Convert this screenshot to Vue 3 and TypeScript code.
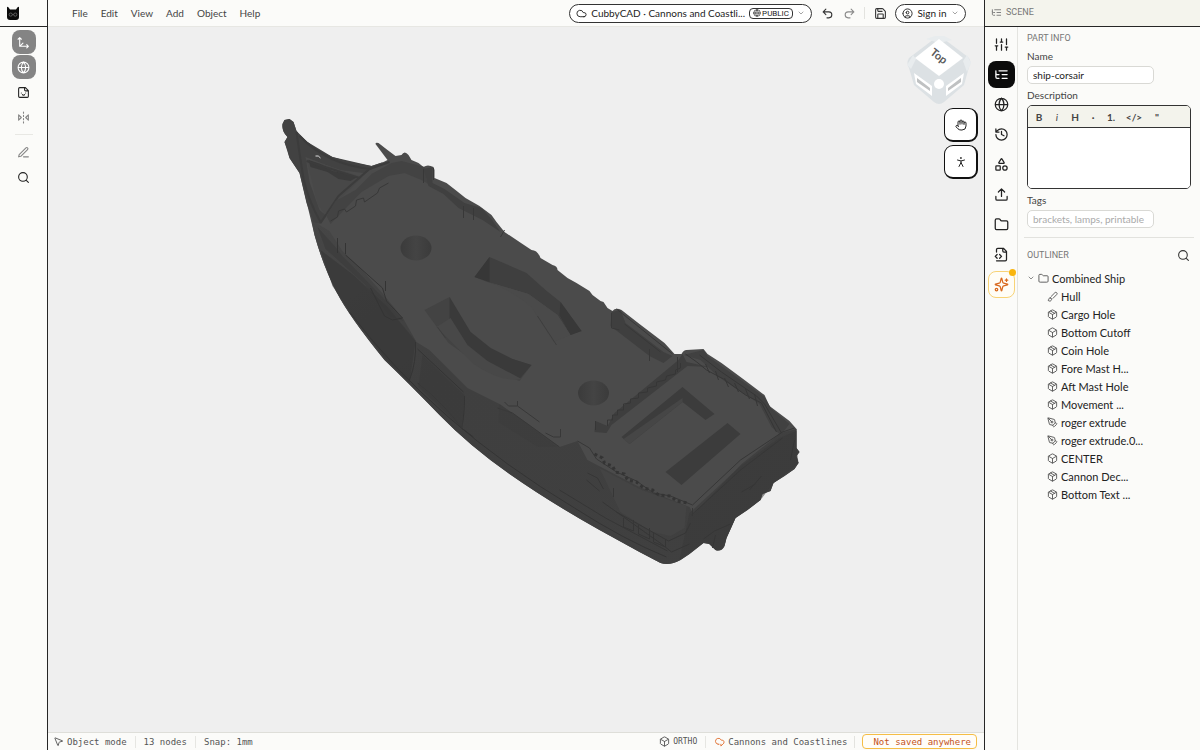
<script setup lang="ts">
import { ref } from 'vue'

type IconName = keyof typeof icons

const icons = {
  axes: 'M5 3v16h16 M5 19l6-6 M2 6l3-3 3 3 M18 16l3 3-3 3',
  globe: 'M2 12a10 10 0 1 0 20 0a10 10 0 1 0-20 0 M12 2a14.5 14.5 0 0 0 0 20 14.5 14.5 0 0 0 0-20 M2 12h20',
  sticker: 'M15.5 3H5a2 2 0 0 0-2 2v14c0 1.1.9 2 2 2h14a2 2 0 0 0 2-2V8.500L15.500 3Z M14 3v4a2 2 0 0 0 2 2h4 M8 13h.01 M16 13h.01 M10 16s.8 1 2 1c1.300 0 2-1 2-1',
  mirror: 'M3 7l5 5-5 5V7 M21 7l-5 5 5 5V7 M12 20v2 M12 14v2 M12 8v2 M12 2v2',
  pen: 'M12 20h9 M16.500 3.500a2.120 2.120 0 0 1 3 3L7 19l-4 1 1-4Z',
  search: 'M3 11a8 8 0 1 0 16 0a8 8 0 1 0-16 0 M21 21l-4.300-4.300',
  cloud: 'M17.500 19H9a7 7 0 1 1 6.710-9h1.790a4.500 4.500 0 1 1 0 9Z',
  cloudWarn: 'M9 18a6.500 6.500 0 1 1 6.700-9h2a4.500 4.500 0 0 1 1.800 8.500L15 22v-4 M9 18l2 0',
  undo: 'M9 14L4 9l5-5 M4 9h10.500a5.500 5.500 0 0 1 0 11H11',
  redo: 'M15 14l5-5-5-5 M20 9H9.500a5.500 5.500 0 0 0 0 11H13',
  save: 'M15.200 3a2 2 0 0 1 1.400.6l3.800 3.800a2 2 0 0 1 .6 1.400V19a2 2 0 0 1-2 2H5a2 2 0 0 1-2-2V5a2 2 0 0 1 2-2z M17 21v-7a1 1 0 0 0-1-1H8a1 1 0 0 0-1 1v7 M7 3v4a1 1 0 0 0 1 1h7',
  user: 'M2 12a10 10 0 1 0 20 0a10 10 0 1 0-20 0 M9 10a3 3 0 1 0 6 0a3 3 0 1 0-6 0 M7 20.662V19a2 2 0 0 1 2-2h6a2 2 0 0 1 2 2v1.662',
  chevron: 'M6 9l6 6 6-6',
  sliders: 'M4 21v-7 M4 10V3 M12 21v-9 M12 8V3 M20 21v-5 M20 12V3 M2 14h4 M10 8h4 M18 16h4',
  tree: 'M21 12h-8 M21 6H8 M21 18h-8 M3 6v4c0 1.100.9 2 2 2h3 M3 10v6c0 1.100.9 2 2 2h3',
  history: 'M3 12a9 9 0 1 0 9-9 9.750 9.750 0 0 0-6.740 2.740L3 8 M3 3v5h5 M12 7v5l4 2',
  shapes: 'M8.300 10a.7.7 0 0 1-.626-1.079L11.400 3a.7.7 0 0 1 1.198-.043L16.300 8.900a.7.7 0 0 1-.572 1.100Z M4 14h5a1 1 0 0 1 1 1v5a1 1 0 0 1-1 1H4a1 1 0 0 1-1-1v-5a1 1 0 0 1 1-1Z M14 17.500a3.500 3.500 0 1 0 7 0a3.500 3.500 0 1 0-7 0',
  upload: 'M12 3v12 M17 8l-5-5-5 5 M21 15v4a2 2 0 0 1-2 2H5a2 2 0 0 1-2-2v-4',
  folder: 'M20 20a2 2 0 0 0 2-2V8a2 2 0 0 0-2-2h-7.900a2 2 0 0 1-1.690-.9L9.600 3.900A2 2 0 0 0 7.930 3H4a2 2 0 0 0-2 2v13a2 2 0 0 0 2 2Z',
  code: 'M4 22h14a2 2 0 0 0 2-2V7l-5-5H6a2 2 0 0 0-2 2v4 M14 2v4a2 2 0 0 0 2 2h4 M5 12l-3 3 3 3 M9 18l3-3-3-3',
  sparkles: 'M9.937 15.500A2 2 0 0 0 8.500 14.063l-6.135-1.582a.5.5 0 0 1 0-.962L8.500 9.936A2 2 0 0 0 9.937 8.500l1.582-6.135a.5.5 0 0 1 .963 0L14.063 8.500A2 2 0 0 0 15.500 9.937l6.135 1.581a.5.5 0 0 1 0 .964L15.500 14.063a2 2 0 0 0-1.437 1.437l-1.582 6.135a.5.5 0 0 1-.963 0z M20 3v4 M22 5h-4 M2 20a2 2 0 1 0 4 0a2 2 0 1 0-4 0',
  hand: 'M18 11V6a2 2 0 0 0-4 0 M14 10V4a2 2 0 0 0-4 0v2 M10 10.500V6a2 2 0 0 0-4 0v8 M18 8a2 2 0 1 1 4 0v6a8 8 0 0 1-8 8h-2c-2.800 0-4.500-.86-5.990-2.340l-3.600-3.600a2 2 0 0 1 2.830-2.820L7 15',
  person: 'M11 4a1 1 0 1 0 2 0a1 1 0 1 0-2 0 M8 21l4-8 4 8 M5 8l7 2 7-2 M12 10v4',
  box: 'M21 8a2 2 0 0 0-1-1.730l-7-4a2 2 0 0 0-2 0l-7 4A2 2 0 0 0 3 8v8a2 2 0 0 0 1 1.730l7 4a2 2 0 0 0 2 0l7-4A2 2 0 0 0 21 16Z M3.300 7l8.700 5 8.700-5 M12 22V12',
  package: 'M21 8a2 2 0 0 0-1-1.730l-7-4a2 2 0 0 0-2 0l-7 4A2 2 0 0 0 3 8v8a2 2 0 0 0 1 1.730l7 4a2 2 0 0 0 2 0l7-4A2 2 0 0 0 21 16Z M3.300 7l8.700 5 8.700-5 M12 22V12 M7.500 4.270l9 5.150',
  nib: 'M15.707 21.293a1 1 0 0 1-1.414 0l-1.586-1.586a1 1 0 0 1 0-1.414l5.586-5.586a1 1 0 0 1 1.414 0l1.586 1.586a1 1 0 0 1 0 1.414z M18 13l-1.375-6.874a1 1 0 0 0-.746-.776L3.235 2.028a1 1 0 0 0-1.207 1.207L5.350 15.879a1 1 0 0 0 .776.746L13 18 M2.300 2.300l7.286 7.286 M9 11a2 2 0 1 0 4 0a2 2 0 1 0-4 0',
  brush: 'M9.060 11.900l8.070-8.060a2.850 2.850 0 1 1 4.030 4.030l-8.060 8.080 M7.070 14.940c-1.660 0-3 1.350-3 3.020 0 1.330-2.500 1.520-2 2.020 1.080 1.100 2.490 2.020 4 2.020 2.200 0 4-1.800 4-4.040a3.010 3.010 0 0 0-3-3.020z',
  pointer: 'M4.037 4.688a.495.495 0 0 1 .651-.651l16 6.500a.5.5 0 0 1-.063.947l-6.124 1.580a2 2 0 0 0-1.438 1.435l-1.579 6.126a.5.5 0 0 1-.947.063z',
}

const menus = ['File', 'Edit', 'View', 'Add', 'Object', 'Help']

const tabs: { icon: IconName; label: string }[] = [
  { icon: 'sliders', label: 'Properties' },
  { icon: 'tree', label: 'Scene' },
  { icon: 'globe', label: 'World' },
  { icon: 'history', label: 'History' },
  { icon: 'shapes', label: 'Shapes' },
  { icon: 'upload', label: 'Export' },
  { icon: 'folder', label: 'Files' },
  { icon: 'code', label: 'Code' },
  { icon: 'sparkles', label: 'Assistant' },
]
const activeTab = ref<IconName>('tree')

const nodes: { icon: IconName; name: string }[] = [
  { icon: 'brush', name: 'Hull' },
  { icon: 'package', name: 'Cargo Hole' },
  { icon: 'box', name: 'Bottom Cutoff' },
  { icon: 'package', name: 'Coin Hole' },
  { icon: 'package', name: 'Fore Mast H...' },
  { icon: 'package', name: 'Aft Mast Hole' },
  { icon: 'package', name: 'Movement ...' },
  { icon: 'nib', name: 'roger extrude' },
  { icon: 'nib', name: 'roger extrude.0...' },
  { icon: 'box', name: 'CENTER' },
  { icon: 'package', name: 'Cannon Dec...' },
  { icon: 'package', name: 'Bottom Text ...' },
]

const partName = ref('ship-corsair')
const description = ref('')
const tags = ref('')
</script>

<template>
  <div class="app">
    <aside class="tools">
      <a class="logo" href="#" aria-label="CubbyCAD">
        <svg viewBox="0 0 14 15" width="14" height="15">
          <path d="M1 1.200Q1.600 0 2.600 1.600L4 3.600h6l1.400-2Q12.400 0 13 1.200V11q0 3-3 3H4q-3 0-3-3Z" fill="#0b0b0b" />
          <circle cx="4.700" cy="8.600" r="1.600" fill="none" stroke="#777" stroke-width=".7" />
          <circle cx="9.300" cy="8.600" r="1.600" fill="none" stroke="#777" stroke-width=".7" />
          <path d="M6.300 8.600h1.400" stroke="#777" stroke-width=".7" />
        </svg>
      </a>
      <div class="tool-list">
        <button class="tool on" aria-label="Axes"><svg viewBox="0 0 24 24" class="icon i13"><path :d="icons.axes" /></svg></button>
        <button class="tool on" aria-label="Grid"><svg viewBox="0 0 24 24" class="icon i13"><path :d="icons.globe" /></svg></button>
        <button class="tool" aria-label="Sticker"><svg viewBox="0 0 24 24" class="icon i13"><path :d="icons.sticker" /></svg></button>
        <button class="tool dim" aria-label="Mirror"><svg viewBox="0 0 24 24" class="icon i13"><path :d="icons.mirror" /></svg></button>
        <hr />
        <button class="tool dim" aria-label="Sketch"><svg viewBox="0 0 24 24" class="icon i13"><path :d="icons.pen" /></svg></button>
        <button class="tool" aria-label="Search"><svg viewBox="0 0 24 24" class="icon i13"><path :d="icons.search" /></svg></button>
      </div>
    </aside>

    <main class="center">
      <header class="topbar">
        <nav class="menus">
          <button v-for="m in menus" :key="m">{{ m }}</button>
        </nav>
        <div class="top-actions">
          <button class="pill project">
            <svg viewBox="0 0 24 24" class="icon i11"><path :d="icons.cloud" /></svg>
            <span class="project-name">CubbyCAD · Cannons and Coastli...</span>
            <span class="public"><svg viewBox="0 0 24 24" class="icon i8"><path :d="icons.globe" /></svg>PUBLIC</span>
            <svg viewBox="0 0 24 24" class="icon i8 faint"><path :d="icons.chevron" /></svg>
          </button>
          <button class="flat undo" aria-label="Undo"><svg viewBox="0 0 24 24" class="icon i13"><path :d="icons.undo" /></svg></button>
          <button class="flat redo" aria-label="Redo"><svg viewBox="0 0 24 24" class="icon i13"><path :d="icons.redo" /></svg></button>
          <span class="sep"></span>
          <button class="flat save" aria-label="Save"><svg viewBox="0 0 24 24" class="icon i13"><path :d="icons.save" /></svg></button>
          <button class="pill sign">
            <svg viewBox="0 0 24 24" class="icon i11"><path :d="icons.user" /></svg>
            <span>Sign in</span>
            <svg viewBox="0 0 24 24" class="icon i8 faint"><path :d="icons.chevron" /></svg>
          </button>
        </div>
      </header>

      <section class="viewport" aria-label="Viewport">
        <svg class="ship" viewBox="49 27 935 705" preserveAspectRatio="xMidYMid meet">
          <defs>
            <linearGradient id="side" x1="0" y1="0" x2="1" y2="1">
              <stop offset="0" stop-color="#464646" />
              <stop offset=".35" stop-color="#3f3f3f" />
              <stop offset="1" stop-color="#404040" />
            </linearGradient>
            <linearGradient id="mast" x1="0" x2="1">
              <stop offset="0" stop-color="#3b3b3b" />
              <stop offset=".5" stop-color="#444" />
              <stop offset="1" stop-color="#3b3b3b" />
            </linearGradient>
          </defs>
          <path fill="#4b4b4b" d="M283 124L285 120 290 119 294 122 297 131 300 135 308 142 318 150 333 157 350 162 372 166 384 162 388 160 376 144Q376 142 379 143L388 150 396 156 402 155Q405 150 409 155L412 160 419 163 424 167Q428 164 434 167L435 170V178L447 183 456 190 466 198 480 206 492 215 497 222 505 232 520 242 532 250Q538 250 541 258L553 265Q558 266 558 270L568 278 577 283 590 291 593 295 601 301 604 302 608 308 613 311Q616 307 622 310L640 324 665 343 675 354 682 354Q684 350 687 350L704 349 708 354 722 363 745 380 765 395 770 406 790 421 797 429V448L800 452 797 456 799 463 795 469 785 476 774 483 771 491 763 494 761 500 752 507 748 510 736 518 732 527 727 538 725 546Q722 552 716 550L710 544 704 543 690 554 681 560Q670 566 661 563L640 552 600 530Q550 502 510 474T440 415T385 360Q350 317 337 292T315 235L303 185 300 173 290 158 288 150 285 142 288 137Q282 131 283 124Z" />
          <path fill="url(#side)" d="M312 220L330 231 343 251 360 267 382 292 404 319 417 342 430 350 468 388 500 404 530 425 560 447 578 441 588 460 640 487 690 507 694 514 742 464 781 433 797 429V448L800 452 797 456 799 463 795 469 785 476 774 483 771 491 763 494 761 500 748 510 736 518 732 527 727 538 725 546Q722 552 716 550L710 544 704 543 690 554 681 560Q670 566 661 563L640 552 600 530Q550 502 510 474T440 415T385 360Q350 317 337 292T315 235Z" />
          <path fill="#383838" d="M690 513L740 467 780 438 797 431V448L799 463 774 483 761 500 736 518 727 538Q724 552 716 550L706 541 680 560Z" opacity=".55" />
          <!-- bow -->
          <path fill="#424242" d="M283 124L285 120 290 119 294 122 297 131 308 142 333 157 372 166 384 162 364 173 340 170 306 157 310 182 320 210 327 216 321 224 314 222 307 203 300 173 290 158 285 142 288 137Q282 131 283 124Z" />
          <path fill="#484848" d="M307 159L351 173 363 177 325 214 318 204Z" />
          <path d="M309 160l12 4 12 7 10 2 15 4-7 4-12-2-11-7-17-5z" fill="#3b3b3b" />
          <path d="M297 132q3 22 7 47 5 22 17 43 M300 136q28 29 72 33 M307 161l53 17 M321 223l18-27 31-27 20-7" fill="none" stroke="#3c3c3c" stroke-width="2" />
          <path d="M316 156q3-1 5 2" stroke="#ddd" fill="none" />
          <!-- forward rail -->
          <path fill="#434343" d="M327 216L336 201 356 190 372 174 392 163 402 161 425 167 427 180 434 187 422 180 405 173 389 176 362 192 331 224Z" />
          <path d="M331 221l7-4 1-6 6-2 2 3 9-6 1-6 7-2 1 4 13-9 2-5 9-5" fill="none" stroke="#383838" />
          <path fill="#404040" d="M424 169l9-2v16l12 6 20 14 17 5 10 11 9 13-18-12-24-12-15-14-15-8z" />
          <path d="M424 169v14M434 168v12M464 206v12M474 208v12M501 237l4-7" stroke="#383838" fill="none" />
          <!-- port rail -->
          <path fill="#3c3c3c" d="M318 227l18 20 7 9 39 40 22 25-14-5-25-32-39-35z" opacity=".75" />
          <path fill="#383838" d="M321 250l33 25 34 32 28 34-6 42-24-24-31-40-22-33z" opacity=".7" />
          <path d="M338 238v15M346 243v11M346 255l37 33 4 13 16 17-10 2-8-4-14-28 M386 281v10 M416 342q1 20-6 38M465 396q0 20-3 32l12 9 M350 312q85 112 225 196 M418 383q24 18 46 47 M418 349l46 43 M575 508q50 32 92 49" stroke="#343434" fill="none" />
          <path fill="#3b3b3b" d="M423 355l42 40-2 34-44-42z" opacity=".7" />
          <!-- mast holes -->
          <ellipse cx="416.500" cy="248" rx="15.500" ry="12.500" fill="url(#mast)" />
          <ellipse cx="594" cy="393" rx="15.500" ry="12.500" fill="url(#mast)" />
          <!-- curved holds -->
          <path fill="#3f3f3f" d="M490 257L527 273 546 290 561 302 582 331 571 335 558 315 529 294 488 282 475 277Z" />
          <path fill="#373737" d="M490 257v25l-15-5z" />
          <path fill="#383838" d="M561 302l21 29-11 4-11-20z" />
          <path fill="#4a4a4a" d="M489 282l40 12 29 21 13 20-17 7-22-35q-20-17-43-25z" />
          <path fill="#434343" d="M425 310l25-13 15 25 6 10 20 16 22 11 19 6-12 16-40-16-31-22z" />
          <path fill="#3a3a3a" d="M450 297l15 25 6 10 20 16 22 11 19 6-12 14-38-14-20-22-12-18z" />
          <path fill="#484848" d="M437 327l14-9 17 27 20 16 34 18q-20 4-48-15z" />
          <path d="M538 316l19 29M438 327l8 11" stroke="#3e3e3e" />
          <!-- midship rails -->
          <path fill="#3f3f3f" d="M612 312l9-2 5 13 38 29 9 4-9 7-14-7-39-30z" />
          <path d="M612 313v15l8 2M650 349v12M625 324l36 28M617 309l56 45" stroke="#383838" fill="none" />
          <path d="M498 408l15 5 47 34M505 402l4 4h9v-5M518 406l22 16M546 433l8 4h7v-8" stroke="#383838" fill="none" />
          <path fill="#3b3b3b" d="M500 404l57 43-18 0-40-25z" opacity=".5" />
          <!-- quarterdeck -->
          <path fill="#3e3e3e" d="M596 421l12 5 7-13 64-53 4-6 4 8 23 5-22-1-76 59-5 8-12-1z" />
          <path d="M608 426v-6l5 0v-5l5 0v-5l6 0v-6l7-1v-4l8-1v-5l9-1v-4l9-2v-4l9-2 1-4 9-2v-4l5-2v-5M596 421v9M678 357v15" stroke="#363636" fill="none" />
          <path fill="#414141" d="M684 355l20-5 4 6 57 41 7 12 18 15-9 11-9-8-12-23-41-27-18-17z" />
          <path d="M686 354q12 8 21 16l17 9 22 16 16 8 15 29 M700 355l22 17 35 24 8 8 17 29 M706 364l4 9M716 371l3 9M725 378l4 9M735 383l4 9M746 389l4 10M755 394l3 12" stroke="#363636" fill="none" />
          <path fill="#3c3c3c" d="M622 437l61-50 32 27-9 6-23-18-53 42z" />
          <path fill="#464646" d="M683 398v4l-53 42-6-5z" />
          <path fill="#3c3c3c" d="M666 472l62-49 13 11-59 51z" />
          <!-- stern trim -->
          <path d="M578 441l12 7 7 11 20 13 20 9 17 12 17 3 22 9 48-45 42-28 12-4M693 508v8M692 515l49-45 42-32" fill="none" stroke="#373737" />
          <path d="M595 454l8 4 2 5 8 3 3 6 9 2 3 6 9 2 7 6 9 2 6 5 12 1 6 5 12 2" fill="none" stroke="#343434" stroke-dasharray="3 3" stroke-width="3" />
          <path fill="#474747" d="M600 468l42 22 45 16-2 22-14 8-18-4-32-20z" opacity=".65" />
          <path d="M588 473l10 5 6 11M587 480l13 11M614 488v9M617 512l52 29 17-8 5-10M624 518v9l10 4v-11M639 525v9l11 5v-11M654 532v10l12 5v-8M603 502l59 42 10 8 18-8M742 492l14-8M750 490l12-14M704 539l11-8 16-7M716 535l-3 13M795 440l-4 20M560 490l46 28 62 33" stroke="#363636" fill="none" />
        </svg>

        <svg class="cube" viewBox="0 0 66 70" width="66" height="70" role="img" aria-label="Top view cube">
          <path d="M3 22L28 3Q33 0 38 3L62 21Q66 25 63 31L58 49 38 66Q33 70 28 66L8 49 3 32Q0 27 3 22Z" fill="#dce1e4" />
          <path d="M1 29l6-10 3 4-5 10zM61 19l4 8-4 9-4-11zM20 3l9-3h9l8 4-13 3z" fill="#e8ecee" />
          <path d="M33 3L57 22 33 40 9 22Z" fill="#fff" />
          <path d="M8 37L26 50V60L10 48ZM58 37L40 50V60L56 48Z" fill="#fff" />
          <path d="M11 42l13 10v3l-13-9zM55 42L42 52v3l13-9z" fill="#bfc1c2" />
          <circle cx="33" cy="48" r="5" fill="#fff" />
          <text x="33" y="24" text-anchor="middle" transform="rotate(38 33 20)">Top</text>
        </svg>

        <div class="view-buttons">
          <button aria-label="Pan"><svg viewBox="0 0 24 24" class="icon i12"><path :d="icons.hand" /></svg></button>
          <button aria-label="Walk"><svg viewBox="0 0 24 24" class="icon i12"><path :d="icons.person" /></svg></button>
        </div>
      </section>

      <footer class="status">
        <span class="cell"><svg viewBox="0 0 24 24" class="icon i11"><path :d="icons.pointer" /></svg>Object mode</span>
        <span class="cell">13 nodes</span>
        <span class="cell">Snap: 1mm</span>
        <span class="grow"></span>
        <button class="ortho"><svg viewBox="0 0 24 24" class="icon i11"><path :d="icons.box" /></svg>ORTHO</button>
        <span class="cell"><svg viewBox="0 0 24 24" class="icon i11 orange"><path :d="icons.cloudWarn" /></svg>Cannons and Coastlines</span>
        <span class="sep"></span>
        <button class="unsaved">Not saved anywhere</button>
      </footer>
    </main>

    <aside class="panel">
      <header class="panel-head"><svg viewBox="0 0 24 24" class="icon i11"><path :d="icons.tree" /></svg>SCENE</header>
      <div class="panel-body">
        <nav class="tabs">
          <button
            v-for="t in tabs"
            :key="t.icon"
            :class="{ active: activeTab === t.icon, spark: t.icon === 'sparkles' }"
            :aria-label="t.label"
            @click="activeTab = t.icon"
          >
            <svg viewBox="0 0 24 24" class="icon i15"><path :d="icons[t.icon]" /></svg>
          </button>
        </nav>
        <div class="content">
          <section class="info">
            <h2>PART INFO</h2>
            <label for="name">Name</label>
            <input id="name" v-model="partName" type="text" />
            <label for="desc">Description</label>
            <div class="editor">
              <div class="format">
                <button><b>B</b></button>
                <button><i>i</i></button>
                <button><b>H</b></button>
                <button><b>·</b></button>
                <button><b>1.</b></button>
                <button class="wide"><b>&lt;/&gt;</b></button>
                <button><b>"</b></button>
              </div>
              <textarea id="desc" v-model="description"></textarea>
            </div>
            <label for="tags">Tags</label>
            <input id="tags" v-model="tags" type="text" placeholder="brackets, lamps, printable" />
          </section>
          <section class="outliner">
            <div class="outliner-head">
              <h2>OUTLINER</h2>
              <button class="flat" aria-label="Search outliner"><svg viewBox="0 0 24 24" class="icon i13"><path :d="icons.search" /></svg></button>
            </div>
            <ul>
              <li class="root">
                <svg viewBox="0 0 24 24" class="icon i8"><path :d="icons.chevron" /></svg>
                <svg viewBox="0 0 24 24" class="icon i11"><path :d="icons.folder" /></svg>
                <span>Combined Ship</span>
              </li>
              <li v-for="n in nodes" :key="n.name">
                <svg viewBox="0 0 24 24" class="icon i11"><path :d="icons[n.icon]" /></svg>
                <span>{{ n.name }}</span>
              </li>
            </ul>
          </section>
        </div>
      </div>
    </aside>
  </div>
</template>

<style>
body {
  margin: 0;
}
</style>

<style scoped>
* {
  box-sizing: border-box;
}
.app {
  display: grid;
  grid-template-columns: 48px minmax(0, 1fr) 216px;
  height: 100vh;
  background: #fbfbf9;
  color: #222;
  font-family: Lato, "Noto Sans", sans-serif;
  font-size: 10px;
}
button,
input,
textarea {
  font: inherit;
  color: inherit;
}
button {
  display: flex;
  align-items: center;
  justify-content: center;
  padding: 0;
  border: 0;
  background: none;
}
svg {
  flex: none;
}
.icon {
  fill: none;
  stroke: currentColor;
  stroke-width: 2;
  stroke-linecap: round;
  stroke-linejoin: round;
}
.i8 { width: 8px; height: 8px; }
.i11 { width: 11px; height: 11px; }
.i12 { width: 12px; height: 12px; }
.i13 { width: 13px; height: 13px; }
.i15 { width: 15px; height: 15px; }
.faint {
  color: #777;
}

.tools {
  border-right: 1px solid #262626;
}
.logo {
  display: flex;
  align-items: center;
  height: 27px;
  padding-left: 6px;
  border-bottom: 1px solid #262626;
}
.tool-list {
  display: flex;
  flex-direction: column;
  align-items: center;
  gap: 1px;
  padding-top: 3px;
}
.tool {
  width: 24px;
  height: 24px;
  border-radius: 8px;
}
.tool.on {
  background: #848484;
  color: #fff;
}
.tool.dim {
  color: #858585;
}
.tool-list hr {
  width: 18px;
  margin: 4px 0;
  border: 0;
  border-top: 1px solid #e8e8e4;
}

.center {
  display: flex;
  flex-direction: column;
  min-width: 0;
}
.topbar {
  display: flex;
  justify-content: space-between;
  align-items: center;
  height: 27px;
  padding: 0 18px 0 24px;
  border-bottom: 1px solid #e7e7e3;
}
.menus {
  display: flex;
  gap: 13px;
  color: #444;
}
.top-actions {
  display: flex;
  align-items: center;
}
.pill {
  height: 19px;
  border: 1px solid #333;
  border-radius: 10px;
  background: #fff;
  color: #222;
}
.project {
  min-width: 239px;
  padding: 0 6px;
  justify-content: flex-start;
  gap: 4px;
}
.project-name {
  flex: 1;
  text-align: left;
  white-space: nowrap;
}
.public {
  display: flex;
  align-items: center;
  gap: 1px;
  height: 11px;
  padding: 0 3px;
  border: 1px solid #333;
  border-radius: 4px;
  font: 8px Roboto, sans-serif;
}
.flat {
  width: 16px;
  height: 20px;
  color: #333;
}
.undo { margin-left: 7px; }
.redo { margin-left: 6px; color: #8a8a8a; }
.sep {
  width: 1px;
  height: 12px;
  margin: 0 7px;
  background: #e3e3df;
}
.sign {
  width: 71px;
  margin-left: 7px;
  gap: 4px;
}

.viewport {
  position: relative;
  flex: 1;
  min-height: 0;
  background: #efefef;
}
.ship {
  position: absolute;
  inset: 0;
  width: 100%;
  height: 100%;
}
.cube {
  position: absolute;
  top: 9px;
  right: 12px;
}
.cube text {
  font: bold 11px Lato, sans-serif;
  fill: #5b5b5b;
}
.view-buttons {
  position: absolute;
  top: 81px;
  right: 6px;
  display: grid;
  gap: 3px;
}
.view-buttons button {
  width: 34px;
  height: 34px;
  border: 1px solid #111;
  border-right-width: 2px;
  border-bottom-width: 2px;
  border-radius: 9px;
  background: #fff;
}

.status {
  display: flex;
  align-items: center;
  height: 18px;
  padding: 0 7px 0 5px;
  border-top: 1px solid #deded9;
  color: #555;
  font: 9px "DejaVu Sans Mono", monospace;
}
.cell,
.ortho {
  display: flex;
  align-items: center;
  gap: 3px;
  height: 12px;
  white-space: nowrap;
}
.status .cell + .cell,
.ortho + .cell {
  margin-left: 8px;
  padding-left: 8px;
  border-left: 1px solid #e6e6e2;
}
.grow {
  flex: 1;
}
.ortho {
  font-size: 8px;
}
.orange {
  color: #e07030;
}
.unsaved {
  height: 15px;
  padding: 0 5px 0 10px;
  border: 1px solid #f5bd45;
  border-radius: 4px;
  background: #fffdf8;
  color: #c4521b;
}

.panel {
  display: flex;
  flex-direction: column;
  min-width: 0;
  border-left: 1px solid #262626;
}
.panel-head {
  display: flex;
  align-items: center;
  gap: 4px;
  height: 27px;
  padding: 0 6px 2px;
  border-bottom: 1px solid #262626;
  background: #f4f4ed;
  color: #777;
  font: 9px Roboto, sans-serif;
}
.panel-body {
  display: flex;
  flex: 1;
  min-height: 0;
}
.tabs {
  display: flex;
  flex-direction: column;
  align-items: center;
  gap: 3px;
  width: 33px;
  padding-top: 4px;
  border-right: 1px solid #e4e4e0;
}
.tabs button {
  width: 27px;
  height: 27px;
  border-radius: 8px;
}
.tabs .active {
  background: #0b0b0b;
  color: #fff;
}
.tabs .spark {
  position: relative;
  border: 1px solid #f8d376;
  background: #fffdf6;
  color: #d9691e;
}
.spark::after {
  content: "";
  position: absolute;
  top: -3px;
  right: -2px;
  width: 7px;
  height: 7px;
  border-radius: 50%;
  background: #f9b50f;
}
.content {
  flex: 1;
  min-width: 0;
  padding: 0 6px;
}
.info {
  display: flex;
  flex-direction: column;
  padding: 4px 3px 9px;
  border-bottom: 1px solid #e2e2de;
}
h2 {
  margin: 0;
  color: #777;
  font: 9px/14px Roboto, sans-serif;
}
label {
  margin: 5px 0 4px;
  color: #444;
  line-height: 12px;
}
input {
  width: 127px;
  height: 18px;
  padding: 0 5px;
  border: 1px solid #d9d9d5;
  border-radius: 5px;
  outline: 0;
  background: #fff;
}
input::placeholder {
  color: #aaa;
  opacity: 1;
}
.editor {
  border: 1px solid #333;
  border-radius: 5px;
  overflow: hidden;
}
.format {
  display: flex;
  height: 22px;
  padding-left: 2px;
  border-bottom: 1px solid #333;
  background: #f3f3ec;
  color: #444;
}
.format button {
  width: 18px;
}
.format .wide {
  width: 28px;
}
.editor textarea {
  display: block;
  width: 100%;
  height: 60px;
  padding: 5px;
  border: 0;
  outline: 0;
  resize: none;
  background: #fff;
}
.outliner {
  padding: 7px 3px;
}
.outliner-head {
  display: flex;
  justify-content: space-between;
  align-items: center;
  height: 20px;
}
ul {
  margin: 4px 0 0;
  padding: 0;
  list-style: none;
}
li {
  display: flex;
  align-items: center;
  gap: 3px;
  height: 18px;
  padding-left: 20px;
  font-size: 11px;
  white-space: nowrap;
}
li .icon {
  color: #555;
}
.root {
  padding-left: 0;
}
</style>
